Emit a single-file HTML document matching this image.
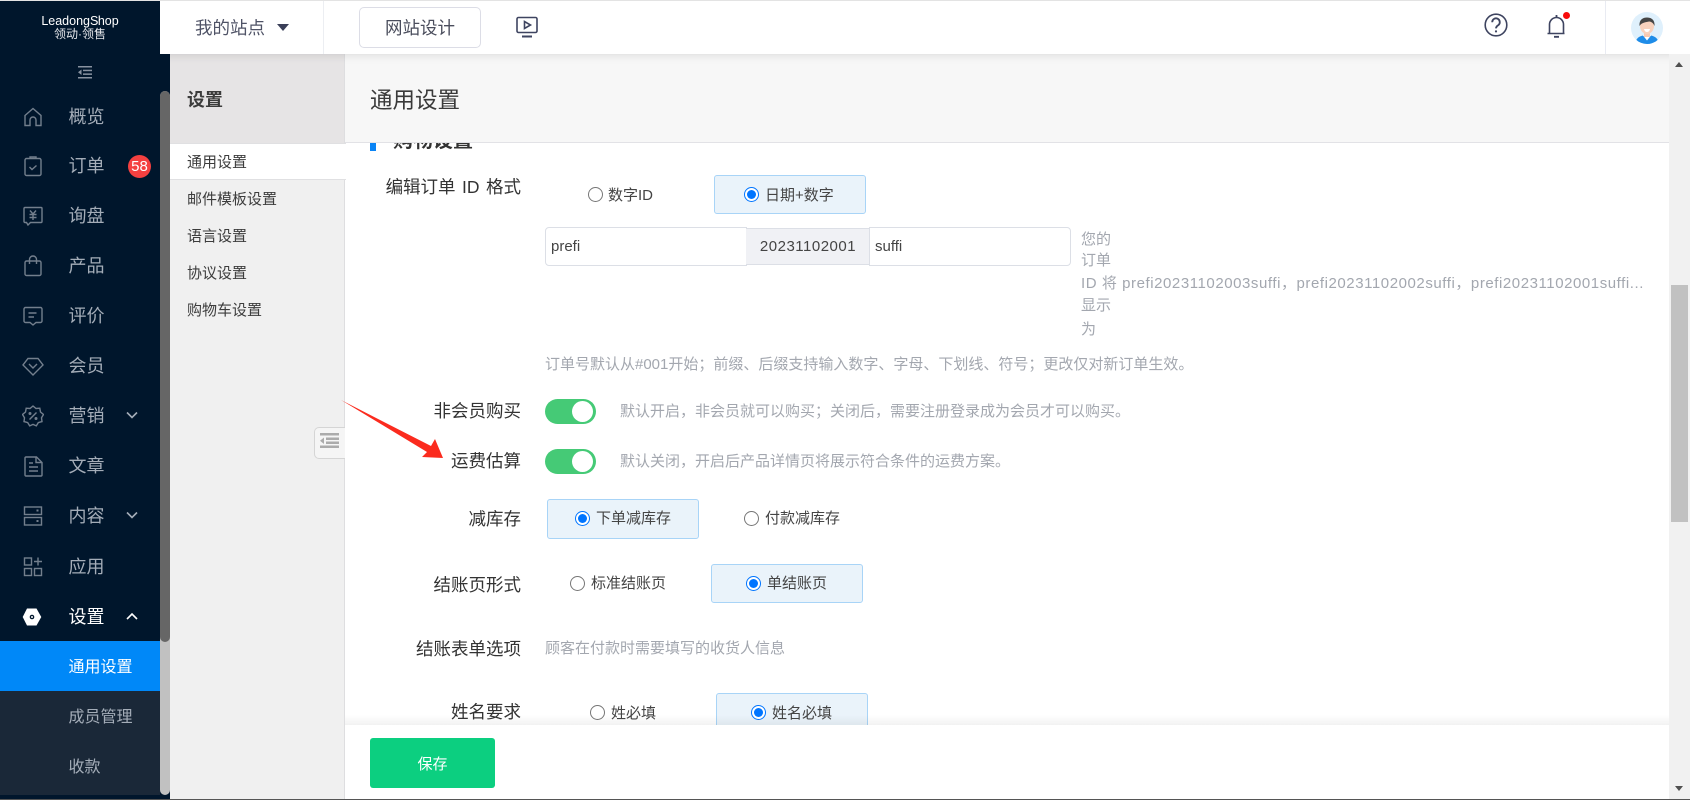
<!DOCTYPE html>
<html lang="zh-CN">
<head>
<meta charset="utf-8">
<title>通用设置</title>
<style>
html,body{margin:0;padding:0;width:1690px;height:800px;overflow:hidden;background:#fff;font-family:"Liberation Sans","Noto Sans CJK SC",sans-serif;}
*{box-sizing:border-box;}
.a{position:absolute;white-space:nowrap;}
.t{position:absolute;white-space:nowrap;line-height:24px;height:24px;}
.m{font-size:18px;color:#a4adb8;left:68.5px;}
.s{font-size:15px;color:#3c3c3c;left:187px;}
.l{font-size:17.5px;color:#333;right:1169px;}
.d{font-size:15px;color:#a3a7af;}
.r{font-size:15px;color:#444;}
.o{position:absolute;width:15px;height:15px;border-radius:50%;border:1.5px solid #767676;background:#fff;}
.c{position:absolute;width:15px;height:15px;border-radius:50%;border:1.5px solid #0075ff;background:#fff;}
.c:after{content:"";position:absolute;left:1.5px;top:1.5px;width:9px;height:9px;border-radius:50%;background:#0075ff;}
.b{position:absolute;background:#eaf3fa;border:1px solid #a8d4f7;border-radius:3px;}
.g{position:absolute;left:545px;width:51px;height:25px;border-radius:13px;background:#45ca76;}
.g:after{content:"";position:absolute;left:27px;top:2px;width:21px;height:21px;border-radius:50%;background:#fff;}
.i{position:absolute;left:22px;width:22px;height:22px;fill:none;stroke:#737f8d;stroke-width:1.4;}
</style>
</head>
<body>
<!-- main content -->
<div class="a" style="left:345px;top:143px;width:1324px;height:582px;overflow:hidden;background:#fff;">
  <div class="a" style="left:25px;top:-2px;width:6px;height:10px;background:#0a84f5;"></div>
  <div class="a" style="left:48px;top:-16px;font-size:20px;line-height:28px;font-weight:700;color:#333;">购物设置</div>
</div>

<div class="t l" style="top:175px;word-spacing:1.6px;">编辑订单 ID 格式</div>
<div class="o" style="left:588px;top:187px;"></div>
<div class="t r" style="left:608px;top:184px;">数字ID</div>
<div class="b" style="left:714px;top:175px;width:152px;height:39px;"></div>
<div class="c" style="left:744px;top:187px;"></div>
<div class="t r" style="left:765px;top:184px;">日期+数字</div>

<div class="a" style="left:545px;top:227px;width:202px;height:39px;border:1px solid #dcdfe6;border-radius:4px 0 0 4px;background:#fff;font-size:15px;line-height:38px;padding-left:5px;color:#444;">prefi</div>
<div class="a" style="left:746px;top:228px;width:124px;height:37px;background:#f0f1f5;border-bottom:1px solid #dcdfe6;border-top:1px solid #dcdfe6;font-size:15px;line-height:36px;text-align:center;color:#444;letter-spacing:.5px;">20231102001</div>
<div class="a" style="left:869px;top:227px;width:202px;height:39px;border:1px solid #dcdfe6;border-radius:0 4px 4px 0;background:#fff;font-size:15px;line-height:38px;padding-left:5px;color:#444;">suffi</div>

<div class="t d" style="left:1081px;top:228px;">您的</div>
<div class="t d" style="left:1081px;top:249px;">订单</div>
<div class="t d" style="left:1081px;top:272px;letter-spacing:.56px;">ID 将 prefi20231102003suffi，prefi20231102002suffi，prefi20231102001suffi...</div>
<div class="t d" style="left:1081px;top:294px;">显示</div>
<div class="t d" style="left:1081px;top:318px;">为</div>

<div class="t d" style="left:545px;top:353px;">订单号默认从#001开始；前缀、后缀支持输入数字、字母、下划线、符号；更改仅对新订单生效。</div>

<div class="t l" style="top:399px;">非会员购买</div>
<div class="g" style="top:399px;"></div>
<div class="t d" style="left:620px;top:400px;">默认开启，非会员就可以购买；关闭后，需要注册登录成为会员才可以购买。</div>

<div class="t l" style="top:449px;">运费估算</div>
<div class="g" style="top:449px;"></div>
<div class="t d" style="left:620px;top:450px;">默认关闭，开启后产品详情页将展示符合条件的运费方案。</div>

<div class="t l" style="top:507px;">减库存</div>
<div class="b" style="left:547px;top:499px;width:152px;height:40px;"></div>
<div class="c" style="left:575px;top:511px;"></div>
<div class="t r" style="left:596px;top:507px;">下单减库存</div>
<div class="o" style="left:744px;top:511px;"></div>
<div class="t r" style="left:765px;top:507px;">付款减库存</div>

<div class="t l" style="top:573px;">结账页形式</div>
<div class="o" style="left:570px;top:576px;"></div>
<div class="t r" style="left:591px;top:572px;">标准结账页</div>
<div class="b" style="left:711px;top:564px;width:152px;height:39px;"></div>
<div class="c" style="left:746px;top:576px;"></div>
<div class="t r" style="left:767px;top:572px;">单结账页</div>

<div class="t l" style="top:637px;">结账表单选项</div>
<div class="t d" style="left:545px;top:637px;">顾客在付款时需要填写的收货人信息</div>

<div class="t l" style="top:700px;">姓名要求</div>
<div class="o" style="left:590px;top:705px;"></div>
<div class="t r" style="left:611px;top:702px;">姓必填</div>
<div class="b" style="left:716px;top:693px;width:152px;height:40px;"></div>
<div class="c" style="left:751px;top:705px;"></div>
<div class="t r" style="left:772px;top:702px;">姓名必填</div>

<!-- footer -->
<div class="a" style="left:345px;top:715px;width:1324px;height:10px;background:linear-gradient(to bottom,rgba(0,0,0,0),rgba(0,0,0,.05));"></div>
<div class="a" style="left:345px;top:725px;width:1324px;height:75px;background:#fff;"></div>
<div class="a" style="left:370px;top:738px;width:125px;height:50px;background:#0ccf80;border-radius:3px;color:#fff;font-size:15px;line-height:53px;text-align:center;">保存</div>

<!-- page head -->
<div class="a" style="left:345px;top:54px;width:1324px;height:89px;background:#f7f7f7;border-bottom:1px solid #e2e2e6;"></div>
<div class="a" style="left:370px;top:85px;font-size:22.5px;line-height:32px;color:#3a3a3a;">通用设置</div>

<!-- sub nav -->
<div class="a" style="left:170px;top:54px;width:175px;height:746px;background:#f0f0f0;border-right:1px solid #dedee0;"></div>
<div class="a" style="left:170px;top:54px;width:174px;height:89px;background:#e6e4e5;"></div>
<div class="a" style="left:187px;top:87px;font-size:18px;line-height:26px;font-weight:700;color:#3c3c3c;">设置</div>
<div class="a" style="left:170px;top:143px;width:176px;height:37px;background:#fff;border-top:1px solid #e0e0e2;border-bottom:1px solid #e0e0e2;"></div>
<div class="t s" style="top:151px;">通用设置</div>
<div class="t s" style="top:188px;">邮件模板设置</div>
<div class="t s" style="top:225px;">语言设置</div>
<div class="t s" style="top:262px;">协议设置</div>
<div class="t s" style="top:299px;">购物车设置</div>
<div class="a" style="left:314px;top:427px;width:31px;height:32px;background:#f5f5f5;border:1px solid #d5d5d5;border-right:none;border-radius:5px 0 0 5px;"></div>
<svg class="a" style="left:320px;top:433px;" width="20" height="16" viewBox="0 0 20 16"><g fill="#ababab"><rect x="0" y="0" width="19" height="2.5"/><rect x="6" y="4.5" width="13" height="2.5"/><rect x="6" y="8.5" width="13" height="2.5"/><rect x="0" y="12.5" width="19" height="2.5"/><path d="M4 4.5v6.5L0 7.8z"/></g></svg>

<!-- top bar -->
<div class="a" style="left:160px;top:0;width:1530px;height:54px;background:#fff;box-shadow:0 2px 8px rgba(0,0,0,.1);"></div>
<div class="a" style="left:0;top:0;width:1690px;height:1px;background:#e3e3e3;z-index:5;"></div>
<div class="a" style="left:323px;top:1px;width:1px;height:53px;background:#eceef2;"></div>
<div class="a" style="left:195px;top:14px;font-size:17.5px;line-height:28px;color:#4f5366;">我的站点</div>
<div class="a" style="left:277px;top:24px;width:0;height:0;border-left:6px solid transparent;border-right:6px solid transparent;border-top:7px solid #3a3f58;"></div>
<div class="a" style="left:359px;top:7px;width:122px;height:41px;border:1px solid #dcdde6;border-radius:5px;background:#fff;font-size:17.5px;line-height:41px;text-align:center;color:#4a4d5c;">网站设计</div>
<svg class="a" style="left:515px;top:15px;" width="24" height="24" viewBox="0 0 24 24" fill="none" stroke="#3e4460" stroke-width="1.6"><rect x="2" y="2.5" width="20" height="15" rx="1.5"/><path d="M9.5 6.5v7l6-3.5z"/><path d="M7 21.5h10" stroke-width="2"/></svg>
<svg class="a" style="left:1484px;top:13px;" width="24" height="24" viewBox="0 0 24 24" fill="none" stroke="#3e4460" stroke-width="1.6"><circle cx="12" cy="12" r="10.8"/><path d="M8.2 9.2a3.8 3.8 0 1 1 5.8 3.2c-1.3.8-2 1.4-2 3" stroke-width="1.8"/><circle cx="12" cy="18.4" r="1.1" fill="#3e4460" stroke="none"/></svg>
<svg class="a" style="left:1546px;top:14px;" width="21" height="24" viewBox="0 0 21 24" fill="none" stroke="#3e4460" stroke-width="1.6"><path d="M1.5 19.5h17M3.5 19.5v-9a7 7 0 0 1 14 0v9"/><path d="M10.5 1v2.500M8 22.800h5" stroke-width="1.8"/></svg>
<div class="a" style="left:1563px;top:12px;width:7px;height:7px;border-radius:50%;background:#f80c0c;"></div>
<div class="a" style="left:1605px;top:1px;width:1px;height:53px;background:#e9ebf2;"></div>
<svg class="a" style="left:1631px;top:12px;" width="32" height="32" viewBox="0 0 32 32"><defs><clipPath id="av"><circle cx="16" cy="16" r="16"/></clipPath></defs><circle cx="16" cy="16" r="16" fill="#dff0fc"/><g clip-path="url(#av)"><path d="M4 32c1-6 4-7.500 8-8.500h8c4 1 7 2.500 8 8.500z" fill="#1e8ce8"/><path d="M12 23.500l4 5 4-5-1-1h-6z" fill="#fff"/><rect x="13" y="18" width="6" height="7" fill="#f6c9b2"/><ellipse cx="16" cy="14" rx="7" ry="8" fill="#f8d2bd"/><path d="M8.500 14c-.5-6 3-8.500 7.500-8.500s8 2.500 7.500 8.500c-1-2.500-2.500-4-5-4.500-2.500.5-7.500.5-10 4.500z" fill="#454545"/><path d="M13 17h6c-.5 2-1.500 3-3 3s-2.500-1-3-3z" fill="#fff"/></g></svg>

<!-- sidebar -->
<div class="a" style="left:0;top:0;width:160px;height:800px;background:#00162c;"></div>
<div class="a" style="left:160px;top:54px;width:10px;height:746px;background:#00162c;"></div>
<div class="a" style="left:160px;top:91px;width:10px;height:704px;background:#c1c1c1;border-radius:5px;"></div>
<div class="a" style="left:160px;top:91px;width:10px;height:551px;background:#666;border-radius:5px;"></div>
<div class="a" style="left:0;top:11px;width:160px;text-align:center;font-size:12.500px;line-height:20px;color:#fff;">Leadong<span style="letter-spacing:-.5px;">S</span>hop</div>
<div class="a" style="left:0;top:26px;width:160px;text-align:center;font-size:12px;line-height:16px;color:#e6e8ec;">领动·领售</div>
<svg class="a" style="left:78px;top:66px;" width="14" height="13" viewBox="0 0 14 13"><g fill="#8892a0"><rect x="0" y="0" width="14" height="1.500"/><rect x="5" y="3.700" width="9" height="1.500"/><rect x="5" y="7.400" width="9" height="1.500"/><rect x="0" y="11" width="14" height="1.500"/><path d="M3.500 3.500v5.500L0 6.200z"/></g></svg>

<svg class="i" style="top:106px;" viewBox="0 0 22 22"><path d="M3 9.500L11 2.500l8 7v10h-5v-5.500a3 3 0 0 0-6 0v5.500H3z"/></svg>
<svg class="i" style="top:155px;" viewBox="0 0 22 22"><rect x="3" y="3.500" width="16" height="17" rx="1.500"/><path d="M8 3.500V2h6v1.500" /><path d="M7.500 12l2.500 2.500 4.500-4"/></svg>
<svg class="i" style="top:205px;" viewBox="0 0 22 22"><path d="M3.500 2.500h16a1 1 0 0 1 1 1v13a1 1 0 0 1-1 1H9l-2.500 2.500L5 17.500H3.500a1 1 0 0 1-1-1v-13a1 1 0 0 1 1-1z" transform="translate(-.5 0)"/><path d="M8 5.500l3 3.500 3-3.500M7.500 9.500h7M7.500 12.500h7M11 9v6"/></svg>
<svg class="i" style="top:255px;" viewBox="0 0 22 22"><rect x="3" y="6" width="16" height="14.500" rx="1.500"/><path d="M7.500 9V4.500a3.500 3.500 0 0 1 7 0V9"/></svg>
<svg class="i" style="top:305px;" viewBox="0 0 22 22"><path d="M3.500 2.500h15a1.500 1.500 0 0 1 1.500 1.500v12a1.500 1.500 0 0 1-1.500 1.500H14l-3 2.500-3-2.500H3.500A1.500 1.500 0 0 1 2 16V4a1.500 1.500 0 0 1 1.500-1.500z"/><path d="M6.500 8h8M6.500 12h5.500"/></svg>
<svg class="i" style="top:355px;" viewBox="0 0 22 22"><path d="M6 3.500h10l5 6.500-10 10L1 10z"/><path d="M7 9l4 4 4-4"/></svg>
<svg class="i" style="top:405px;" viewBox="0 0 22 22"><path d="M11 1l3 2.500 3.800-.3.700 3.800 3 2.500-2 3.300.5 3.800-3.700 1-2 3.300-3.300-1.500-3.300 1.500-2-3.300-3.700-1 .5-3.800-2-3.300 3-2.500.7-3.800 3.800.3z"/><path d="M14.500 7.500l-7 7"/><circle cx="8" cy="8.500" r=".8"/><circle cx="14" cy="13.500" r=".8"/></svg>
<svg class="i" style="top:455px;" viewBox="0 0 22 22"><path d="M3 3a1 1 0 0 1 1-1h10.500L20 7.500V20a1 1 0 0 1-1 1H4a1 1 0 0 1-1-1z"/><path d="M14 2v5.500h6M7 8h4M7 12h9M7 16h9"/></svg>
<svg class="i" style="top:505px;" viewBox="0 0 22 22"><rect x="2.500" y="2" width="17" height="7.500"/><rect x="2.500" y="12.500" width="17" height="7.500"/><path d="M14.500 5.500h2M14.500 16h2" stroke-width="2"/></svg>
<svg class="i" style="top:556px;" viewBox="0 0 22 22"><rect x="2.500" y="2" width="7" height="7"/><rect x="2.500" y="12.500" width="7" height="7"/><rect x="12.500" y="12.500" width="7" height="7"/><path d="M16 1.500v8M12 5.500h8"/></svg>
<svg class="a" style="left:22px;top:607px;" width="20" height="20" viewBox="0 0 20 20"><path d="M5 1.500h9.500l4.800 8.500-4.800 8.500H5L.7 10z" fill="#fff"/><circle cx="10" cy="10" r="2.300" fill="#00162c"/><circle cx="10" cy="10" r="1" fill="#fff"/></svg>

<div class="t m" style="top:105px;">概览</div>
<div class="t m" style="top:154px;">订单</div>
<div class="a" style="left:128px;top:155px;width:23px;height:23px;border-radius:50%;background:#f44040;color:#fff;font-size:15px;line-height:23px;text-align:center;">58</div>
<div class="t m" style="top:204px;">询盘</div>
<div class="t m" style="top:254px;">产品</div>
<div class="t m" style="top:304px;">评价</div>
<div class="t m" style="top:354px;">会员</div>
<div class="t m" style="top:404px;">营销</div>
<div class="t m" style="top:454px;">文章</div>
<div class="t m" style="top:504px;">内容</div>
<div class="t m" style="top:555px;">应用</div>
<div class="t m" style="top:605px;color:#fff;">设置</div>
<svg class="a" style="left:126px;top:411px;" width="12" height="9" viewBox="0 0 12 9" fill="none" stroke="#a4adb8" stroke-width="1.600"><path d="M1 1.500l5 5 5-5"/></svg>
<svg class="a" style="left:126px;top:511px;" width="12" height="9" viewBox="0 0 12 9" fill="none" stroke="#a4adb8" stroke-width="1.600"><path d="M1 1.500l5 5 5-5"/></svg>
<svg class="a" style="left:126px;top:612px;" width="12" height="9" viewBox="0 0 12 9" fill="none" stroke="#fff" stroke-width="1.600"><path d="M1 7l5-5 5 5"/></svg>
<div class="a" style="left:0;top:641px;width:160px;height:50px;background:#0088f8;"></div>
<div class="a" style="left:0;top:691px;width:160px;height:104px;background:#1a2838;"></div>
<div class="t" style="left:68.500px;top:656px;font-size:16px;color:#fff;">通用设置</div>
<div class="t" style="left:68.500px;top:706px;font-size:16px;color:#a4adb8;">成员管理</div>
<div class="t" style="left:68.500px;top:756px;font-size:16px;color:#a4adb8;">收款</div>

<!-- right scrollbar -->
<div class="a" style="left:1669px;top:54px;width:21px;height:745px;background:#f1f1f1;"></div>
<div class="a" style="left:1671px;top:285px;width:17px;height:237px;background:#c1c1c1;"></div>
<div class="a" style="left:1675px;top:62px;width:0;height:0;border-left:4.500px solid transparent;border-right:4.500px solid transparent;border-bottom:5px solid #505050;"></div>
<div class="a" style="left:1675px;top:786px;width:0;height:0;border-left:4.500px solid transparent;border-right:4.500px solid transparent;border-top:5px solid #505050;"></div>

<!-- bottom line -->
<div class="a" style="left:0;top:799px;width:1690px;height:1px;background:#555;z-index:5;"></div>

<!-- red arrow -->
<svg class="a" style="left:340px;top:395px;z-index:6;" width="115" height="70" viewBox="0 0 115 70"><polygon points="1,5 91,51 95,44 103,63 82,62 87,57" fill="#fb2b1e"/></svg>
</body>
</html>
